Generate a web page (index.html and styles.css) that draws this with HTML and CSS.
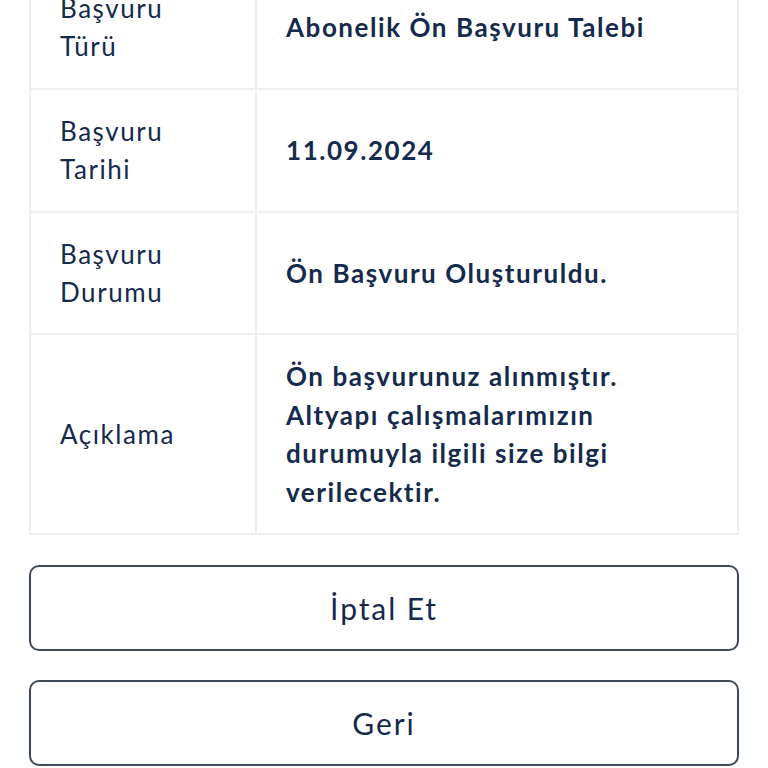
FILE: index.html
```html
<!DOCTYPE html>
<html lang="tr">
<head>
<meta charset="utf-8">
<link rel="stylesheet" href="styles.css">
</head>
<body>
<main class="page">
  <table class="details">
    <tr>
      <th>Başvuru Türü</th>
      <td>Abonelik Ön Başvuru Talebi</td>
    </tr>
    <tr>
      <th>Başvuru Tarihi</th>
      <td>11.09.2024</td>
    </tr>
    <tr>
      <th>Başvuru Durumu</th>
      <td>Ön Başvuru Oluşturuldu.</td>
    </tr>
    <tr>
      <th>Açıklama</th>
      <td>Ön başvurunuz alınmıştır. Altyapı çalışmalarımızın durumuyla ilgili size bilgi verilecektir.</td>
    </tr>
  </table>
  <div class="actions">
    <button class="btn" type="button">İptal Et</button>
    <button class="btn" type="button">Geri</button>
  </div>
</main>
</body>
</html>
```
FILE: styles.css
```css
html, body {
  margin: 0;
  padding: 0;
  background: #ffffff;
}
body {
  font-family: Lato, "Open Sans", sans-serif;
  color: #152a4c;
  overflow: hidden;
  height: 768px;
}
.page {
  padding: 0 29px 0 29px;
  margin-top: -35px;
}
.details {
  width: 100%;
  border-collapse: collapse;
  table-layout: fixed;
}
.details th,
.details td {
  border: 2px solid #eeeeee;
  padding: 22px 29px;
  font-size: 26px;
  line-height: 38.4px;
  letter-spacing: 1.55px;
  text-align: left;
  vertical-align: middle;
}
.details th {
  width: 166px;
  font-weight: 400;
}
.details td {
  font-weight: 700;
}
.actions {
  display: flex;
  flex-direction: column;
  gap: 29px;
  margin-top: 30px;
}
.btn {
  height: 86px;
  border: 2px solid #3f4a58;
  border-radius: 10px;
  background: #ffffff;
  color: #152a4c;
  font-family: Lato, "Open Sans", sans-serif;
  font-size: 30px;
  letter-spacing: 1.9px;
  font-weight: 400;
}
```
